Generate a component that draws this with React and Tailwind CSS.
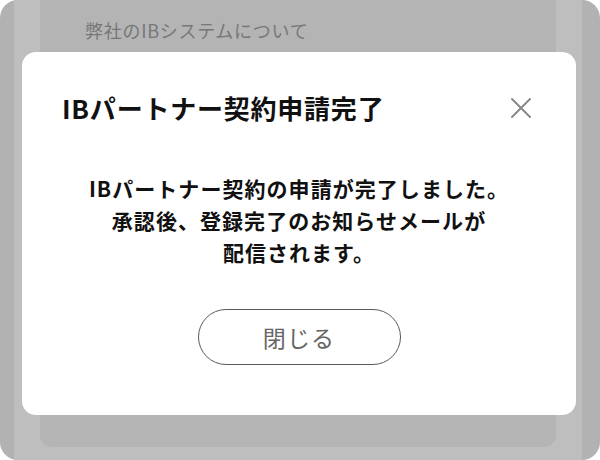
import React from 'react';

const jp = "font-['Noto_Sans_CJK_JP','Noto_Sans',sans-serif]";

const CloseIcon = () => (
  <svg width="22" height="22" viewBox="0 0 22 22" fill="none" stroke="#888" strokeWidth="2" strokeLinecap="round">
    <path d="M2 2L20 20M20 2L2 20" />
  </svg>
);

const App = () => {
  return (
    <div className={`relative w-[600px] h-[460px] rounded-[18px] overflow-hidden bg-[#b2b2b2] flex ${jp}`}>
      {/* page behind the overlay */}
      <div className="w-[14px] shrink-0" />
      <div className="flex-1 bg-[#bebebe] px-[26px]">
        <div className="h-[447px] bg-[#b4b4b4] rounded-b-[12px] px-[45px] pt-[17px]">
          <p className="text-[18px] tracking-[0.04em] text-[#777]">弊社のIBシステムについて</p>
        </div>
      </div>
      <div className="w-[18px] shrink-0" />

      {/* dialog */}
      <div className="absolute left-[22px] top-[52px] w-[554px] h-[363px] bg-white rounded-[14px] flex flex-col">
        <div className="flex items-center justify-between pl-[40px] pr-[44px] pt-[43px]">
          <h2 className="text-[26px] font-bold tracking-[0.03em] text-[#111] leading-none">IBパートナー契約申請完了</h2>
          <CloseIcon />
        </div>
        <p className="mt-[51px] text-center text-[21px] font-bold tracking-[0.05em] leading-[32px] text-[#111]">
          IBパートナー契約の申請が完了しました。<br />
          承認後、登録完了のお知らせメールが<br />
          配信されます。
        </p>
        <div className="flex justify-center mt-[41px]">
          <button className="w-[203px] h-[56px] rounded-full border-[1.5px] border-[#5a5a5a] text-[23px] tracking-[0.05em] text-[#666]">
            閉じる
          </button>
        </div>
      </div>
    </div>
  );
};

export default App;
